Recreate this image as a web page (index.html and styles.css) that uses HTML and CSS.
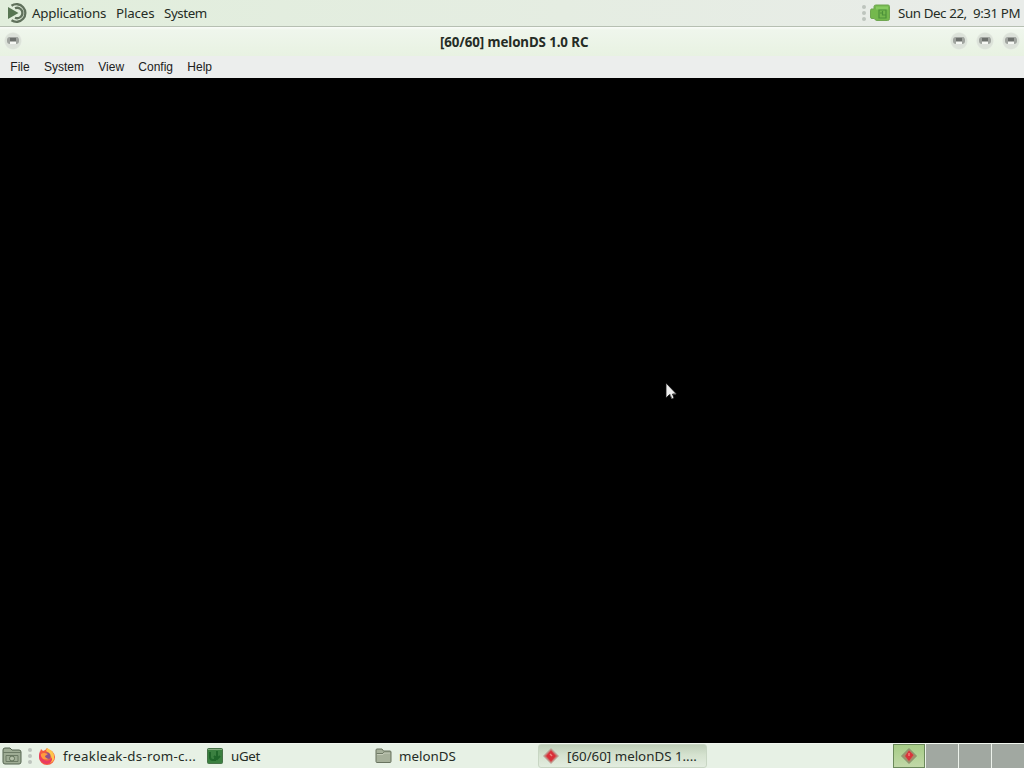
FILE: index.html
```
<!DOCTYPE html>
<html lang="en">
	<head>
		<meta charset="utf-8">
		<title>[60/60] melonDS 1.0 RC</title>
		<link rel="stylesheet" href="styles.css">
	</head>
	<body>
		<div class="top-panel">
			<svg class="mate-logo" width="20" height="20" viewBox="0 0 20 20">
				<path d="M0 4L10.500 10L0 16Z" fill="#587653" />
				<path d="M3.500 2.800A8.800 8.800 0 1 1 3.500 17.200M7 5.300A5.200 5.200 0 1 1 7 14.700" fill="none" stroke="#60715c" stroke-width="2.300" />
			</svg>
			<span class="panel-item applications">Applications</span>
			<span class="panel-item places">Places</span>
			<span class="panel-item system">System</span>
			<div class="tray">
				<div class="grip"><i></i><i></i><i></i></div>
				<svg width="20" height="18" viewBox="0 0 20 18">
					<path d="M1 5h3V2.500Q4 1 6 1h12q1.500 0 1.500 1.500v12q0 2-2 2H7q-2 0-2.500-2H2q-1.500 0-1.500-1.500V7z" fill="#74b84d" stroke="#6fa650" />
					<path d="M6 2.500h12v3H6z" fill="#87cb60" />
					<path d="M9 6h7v8H9zM12.500 7v4h3M10 9h2" fill="none" stroke="#4c913a" stroke-width="1.200" />
				</svg>
				<span class="clock">Sun Dec 22,&nbsp; 9:31 PM</span>
			</div>
		</div>

		<div class="titlebar">
			<span class="window-button"><i></i></span>
			<h1>[60/60] melonDS 1.0 RC</h1>
			<div class="window-controls">
				<span class="window-button"><i></i></span>
				<span class="window-button"><i></i></span>
				<span class="window-button"><i></i></span>
			</div>
		</div>

		<div class="menubar">
			<span>File</span>
			<span>System</span>
			<span>View</span>
			<span>Config</span>
			<span>Help</span>
		</div>

		<div class="screen">
			<svg class="cursor" width="14" height="20" viewBox="0 0 14 20">
				<path d="M1 1V16L4.500 12.500L7 17L9 16L7.500 12H11.500Z" fill="#eee" stroke="#111" stroke-width=".8" />
				<path d="M5 12L7 17M8 12h3" stroke="#777" stroke-width=".8" />
			</svg>
		</div>

		<div class="taskbar">
			<svg class="show-desktop" width="20" height="18" viewBox="0 0 20 18">
				<path d="M1 15V3q0-2 2-2h5l2 2h7q2 0 2 2v10q0 2-2 2H3q-2 0-2-2z" fill="#9eac94" stroke="#53634e" />
				<path d="M1 5.500h18M4 8.500h12v6H4z" fill="none" stroke="#6c7b65" />
				<circle cx="10" cy="11.500" r="2.500" fill="#b3bfa8" stroke="#607158" />
			</svg>
			<div class="grip"><i></i><i></i><i></i></div>
			<div class="tasks">
				<div class="task browser">
					<svg width="18" height="18" viewBox="0 0 18 18">
						<path d="M2 5L3 2L5 4Q7 4 9 1Q11 4 14 4Q17 7 17 10A8 8 0 0 1 1 10Q1 7 2 5z" fill="#f45d3e" />
						<path d="M9 1Q16 4 16 9Q17 15 11 16Q15 13 12 8Q11 5 8 4z" fill="#ffc64a" />
						<path d="M2 4Q2 13 9 14Q14 13 14 9Q15 17 8 17Q1 15 1 9z" fill="#e93b60" />
						<circle cx="9" cy="9" r="3.500" fill="#90518b" />
						<path d="M3 7Q6 5 10 7L7 9Q7 11 11 12Q5 14 3 9z" fill="#ff9b3d" />
					</svg>
					<span>freakleak-ds-rom-c...</span>
				</div>
				<div class="task uget">
					<svg width="16" height="16" viewBox="0 0 16 16">
						<rect x=".5" y=".5" width="15" height="15" rx="1" fill="#3b8040" stroke="#477348" />
						<path d="M3 4v5q0 3 3 3h2V8M10 3v8m-3-3 3 3 3-3" fill="none" stroke="#20662a" stroke-width="2" />
						<path d="M1 1.500h14" stroke="#87ac80" />
					</svg>
					<span>uGet</span>
				</div>
				<div class="task folder">
					<svg width="17" height="16" viewBox="0 0 17 16">
						<path d="M1 13.500V2q0-1 1-1h5l1.500 2H15q1 0 1 1v9.500q0 1-1 1H2q-1 0-1-1z" fill="#a6b09a" stroke="#68735f" />
						<path d="M1.500 5.500H8l1-1.500h6.500" fill="none" stroke="#6f7b66" />
						<path d="M2 6.500h6l1-1.500h6" fill="none" stroke="#c5cbb9" />
					</svg>
					<span>melonDS</span>
				</div>
				<div class="task active">
					<svg width="16" height="16" viewBox="0 0 16 16">
						<path d="M8 .5L15.500 8L8 15.500L.5 8z" fill="#c9746f" stroke="#bdb0a2" />
						<path d="M8 2.500L13 8L8 13.500L3 8z" fill="#d92f38" />
						<path d="M7 6l2 2" stroke="#f08580" stroke-width="1.500" />
					</svg>
					<span>[60/60] melonDS 1....</span>
				</div>
			</div>
			<div class="workspaces">
				<div class="workspace current">
					<svg width="16" height="16" viewBox="0 0 16 16">
						<path d="M8 .5L15.500 8L8 15.500L.5 8z" fill="#a68b68" stroke="#829571" />
						<path d="M8 2.500L12.500 7L8 13L4 8z" fill="#d9343b" />
						<path d="M8 5v3" stroke="#f47e78" stroke-width="1.500" />
					</svg>
				</div>
				<div class="workspace"></div>
				<div class="workspace"></div>
				<div class="workspace"></div>
			</div>
		</div>
	</body>
</html>
```
FILE: styles.css
```
* {
	margin: 0;
	padding: 0;
	box-sizing: border-box;
}

body {
	width: 1024px;
	height: 768px;
	display: flex;
	flex-direction: column;
	overflow: hidden;
	background: #000;
	color: #252c25;
	font: 13.33px "Noto Sans", sans-serif;
	white-space: nowrap;
}

svg {
	display: block;
	flex: none;
}

.top-panel {
	height: 27px;
	display: flex;
	align-items: center;
	padding: 0 4px 0 8px;
	background: linear-gradient(90deg, #e1eedc, #e5ede2 55%, #e9ece9);
	border-bottom: 1px solid #b6bfb2;
}

.mate-logo {
	margin-right: 4px;
}

.panel-item {
	margin-right: 10px;
}

.applications {
	width: 74px;
	letter-spacing: -0.2px;
}

.places {
	width: 38px;
	letter-spacing: -0.15px;
}

.system {
	letter-spacing: -0.4px;
}

.tray {
	margin-left: auto;
	display: flex;
	align-items: center;
}

.tray svg {
	margin: 0 8px 0 4px;
}

.clock {
	width: 122px;
	letter-spacing: -0.4px;
}

.grip {
	width: 5px;
	display: flex;
	flex-direction: column;
	align-items: center;
	gap: 2px;
}

.grip i {
	width: 4px;
	height: 4px;
	border-radius: 50%;
	background: #bdc5bd;
}

.titlebar {
	height: 29px;
	display: flex;
	align-items: center;
	justify-content: space-between;
	padding: 0 4px 1px;
	background: linear-gradient(#fafcf9 0, #eff6ec 3px, #e8f2e2);
	position: relative;
}

.titlebar h1 {
	position: absolute;
	left: 440px;
	top: 6px;
	font-size: 13.33px;
	line-height: 18px;
	font-weight: 700;
	letter-spacing: -0.1px;
}

.window-controls {
	display: flex;
	gap: 8px;
}

.window-button {
	width: 18px;
	height: 18px;
	padding: 5px 3px;
	border-radius: 50%;
	background: radial-gradient(circle, #dce0da 35%, #dce3d9 60%, #eef3eb 72%);
}

.window-button i {
	display: block;
	width: 12px;
	height: 7px;
	border-radius: 3px;
	border: solid #a0a49f;
	border-width: 1px 3px 0;
	background: linear-gradient(#6d716d 0 3px, #f6f8f4 4px);
}

.menubar {
	height: 22px;
	display: flex;
	align-items: center;
	gap: 14.3px;
	padding-left: 10.3px;
	background: #eceeed;
	font: 12px "Liberation Sans", sans-serif;
	color: #202020;
}

.screen {
	height: 665px;
	background: #000;
	position: relative;
}

.cursor {
	position: absolute;
	left: 665px;
	top: 304px;
}

.taskbar {
	height: 25px;
	display: flex;
	align-items: center;
	background: #e7f1e5;
	border-top: 1px solid #f1f6ef;
}

.show-desktop {
	margin: 0 5px 0 2px;
}

.tasks {
	display: flex;
	height: 100%;
	margin-left: 2px;
}

.task {
	width: 168px;
	display: flex;
	align-items: center;
	gap: 8px;
	padding-left: 5px;
}

.browser {
	gap: 7px;
	padding-left: 4px;
	letter-spacing: 0.25px;
}

.uget {
	letter-spacing: -0.3px;
}

.folder {
	gap: 7px;
}

.active {
	width: 169px;
	padding-left: 4px;
	background: linear-gradient(#bfcfb9, #d5e2cf 45%, #e2ecdf);
	border: 1px solid #c8d6c3;
	border-radius: 3px;
}

.workspaces {
	width: 131px;
	height: 100%;
	margin-left: auto;
	display: flex;
	gap: 1px;
	background: #edf2eb;
}

.workspace {
	width: 32px;
	background: #a1a8a1;
}

.current {
	display: flex;
	align-items: center;
	justify-content: center;
	background: linear-gradient(#a6cc86, #c1d8a8);
	border: 1px solid #6b895b;
}
```
